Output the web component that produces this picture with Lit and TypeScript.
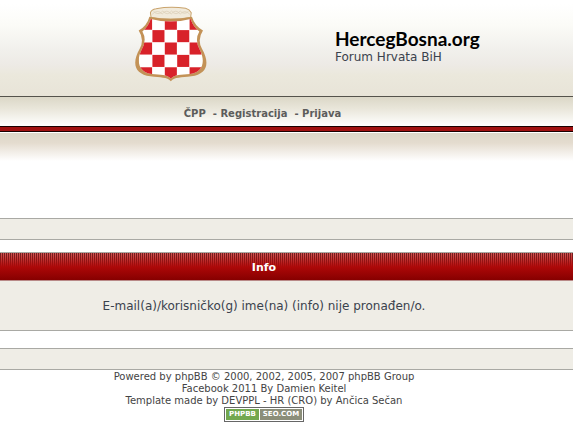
import { LitElement, html, css, svg } from "lit";
import { customElement } from "lit/decorators.js";

const CELLS = [0, 1, 2, 3, 4].flatMap((row) =>
  [0, 1, 2, 3, 4].filter((col) => (row + col) % 2 === 0).map((col) => ({ row, col }))
);

@customElement("forum-crest")
export class ForumCrest extends LitElement {
  static styles = css`
    :host { display: block; }
    svg { display: block; width: 100%; height: auto; }
  `;

  render() {
    return html`
      <svg viewBox="40 18 218 226" role="img" aria-label="HercegBosna.org">
        <defs>
          <clipPath id="inner">
            <path d="M90 57 Q150 72 209 57 Q217 81 235 94 Q220 120 237 150 C255 185 244 217 207 221 C180 224 161 222 150 235 C139 222 120 224 93 221 C56 217 45 185 62 150 Q80 120 65 94 Q82 81 90 57Z"></path>
          </clipPath>
        </defs>
        <path fill="#f1eadb" stroke="#c9a36c" stroke-width="3" d="M91 52 L89 38 Q92 28 106 26 Q150 18 194 25 Q206 28 211 38 L209 52 Q150 62 91 52Z"></path>
        <path fill="none" stroke="#d9ccb4" stroke-width="2" d="M94 43 Q110 26 124 42 Q138 25 151 42 Q165 25 178 42 Q192 27 207 43 M98 34 Q112 48 126 33 Q140 49 152 33 Q166 49 178 33 Q190 46 203 34"></path>
        <path fill="#c39257" d="M86 50 Q150 64 213 50 Q221 77 246 91 Q228 118 243 146 C268 190 258 222 211 228 C180 232 162 230 150 243 C138 230 120 232 89 228 C42 222 32 190 57 146 Q72 118 54 91 Q79 77 86 50Z"></path>
        <g clip-path="url(#inner)">
          <rect x="40" y="45" width="218" height="200" fill="#fff"></rect>
          ${CELLS.map(
            ({ row, col }) =>
              svg`<rect x=${58 + col * 37} y=${53 + row * 37} width="36" height="36" fill="#d8222a"></rect>`
          )}
        </g>
      </svg>
    `;
  }
}

@customElement("app-root")
export class AppRoot extends LitElement {
  static styles = css`
    :host {
      display: block;
      background: #fff;
      color: #3a424d;
      font: 10px/12px Verdana, "DejaVu Sans", sans-serif;
    }
    a { color: inherit; text-decoration: none; }
    .masthead {
      display: flex;
      align-items: center;
      gap: 128px;
      box-sizing: border-box;
      min-height: 96px;
      padding: 6px 40px 14px 134px;
      background: linear-gradient(#fff 4px, #fbfbf7 25px, #f1f0ec 50px, #edeae5 65px, #ebe8dc 75px, #e8e4d8);
    }
    .crest { flex: none; width: 73px; }
    .names { padding-top: 6px; }
    .title {
      margin: 0;
      font: bold 19px/20px "Trebuchet MS", Lato, sans-serif;
      color: #000;
    }
    .title a { display: block; }
    .tagline {
      margin: 0;
      font-size: 12px;
      line-height: 16px;
    }
    .menu {
      display: flex;
      justify-content: center;
      gap: 7px;
      padding: 10px 48px 6px 0;
      border-top: 1px solid #55534c;
      background: linear-gradient(#dbd7c7, #e9e6da 40%, #fff);
      color: #5c5c5c;
      font-weight: bold;
      line-height: 13px;
    }
    .stripe {
      height: 4px;
      border: solid #1a0000;
      border-width: 1px 0;
      background: #a01010;
    }
    .shade {
      height: 85px;
      margin-top: 1px;
      background: linear-gradient(#dcd6c7, #e4dccf 10px, #fff 28px);
    }
    .bar {
      height: 20px;
      border: solid #a9a9a4;
      border-width: 1px 0;
      background: #efede6;
    }
    .panel {
      margin: 12px 0 17px;
      border: solid #a9a9a4;
      border-width: 1px 0;
      text-align: center;
      background: #efede6;
    }
    .heading {
      margin: 0;
      padding: 2px 45px 0 0;
      border-bottom: 1px solid #b98a88;
      background:
        linear-gradient(rgba(176, 10, 10, 0), #ad0808 14px, #860000),
        repeating-linear-gradient(90deg, #6e2020 0 1px, #d45555 1px 2px);
      color: #fff;
      font-size: 11px;
      line-height: 25px;
    }
    .message {
      margin: 0;
      padding: 16px 45px 15px 0;
      font-size: 12px;
      line-height: 18px;
    }
    .footer {
      display: flex;
      flex-direction: column;
      align-items: center;
      padding: 1px 45px 11px 0;
      color: #444;
      text-align: center;
    }
    .footer p { margin: 0; }
    .badge {
      display: grid;
      grid-template-columns: 34px 42px;
      box-sizing: border-box;
      border: 1px solid #666;
      padding: 1px;
      background: #fff;
      color: #fff;
      font-size: 7px;
      font-weight: bold;
      line-height: 11px;
    }
    .green { background: #72a84f; border-right: 1px solid #fff; }
    .grey { background: #8b8e79; }
  `;

  render() {
    return html`
      <header>
        <div class="masthead">
          <a class="crest" href="#"><forum-crest></forum-crest></a>
          <div class="names">
            <h1 class="title"><a href="#">HercegBosna.org</a></h1>
            <p class="tagline">Forum Hrvata BiH</p>
          </div>
        </div>
        <nav class="menu">
          <a href="#">ČPP</a>
          <span>- <a href="#">Registracija</a></span>
          <span>- <a href="#">Prijava</a></span>
        </nav>
        <div class="stripe"></div>
        <div class="shade"></div>
      </header>
      <main>
        <div class="bar"></div>
        <section class="panel">
          <h2 class="heading">Info</h2>
          <p class="message">E-mail(a)/korisničko(g) ime(na) (info) nije pronađen/o.</p>
        </section>
        <div class="bar"></div>
      </main>
      <footer class="footer">
        <p>Powered by <a href="#">phpBB</a> © 2000, 2002, 2005, 2007 phpBB Group</p>
        <p>Facebook 2011 By <a href="#">Damien Keitel</a></p>
        <p>Template made by <a href="#">DEVPPL</a> - HR (CRO) by <a href="#">Ančica Sečan</a></p>
        <a class="badge" href="#"><span class="green">PHPBB</span><span class="grey">SEO.COM</span></a>
      </footer>
    `;
  }
}
